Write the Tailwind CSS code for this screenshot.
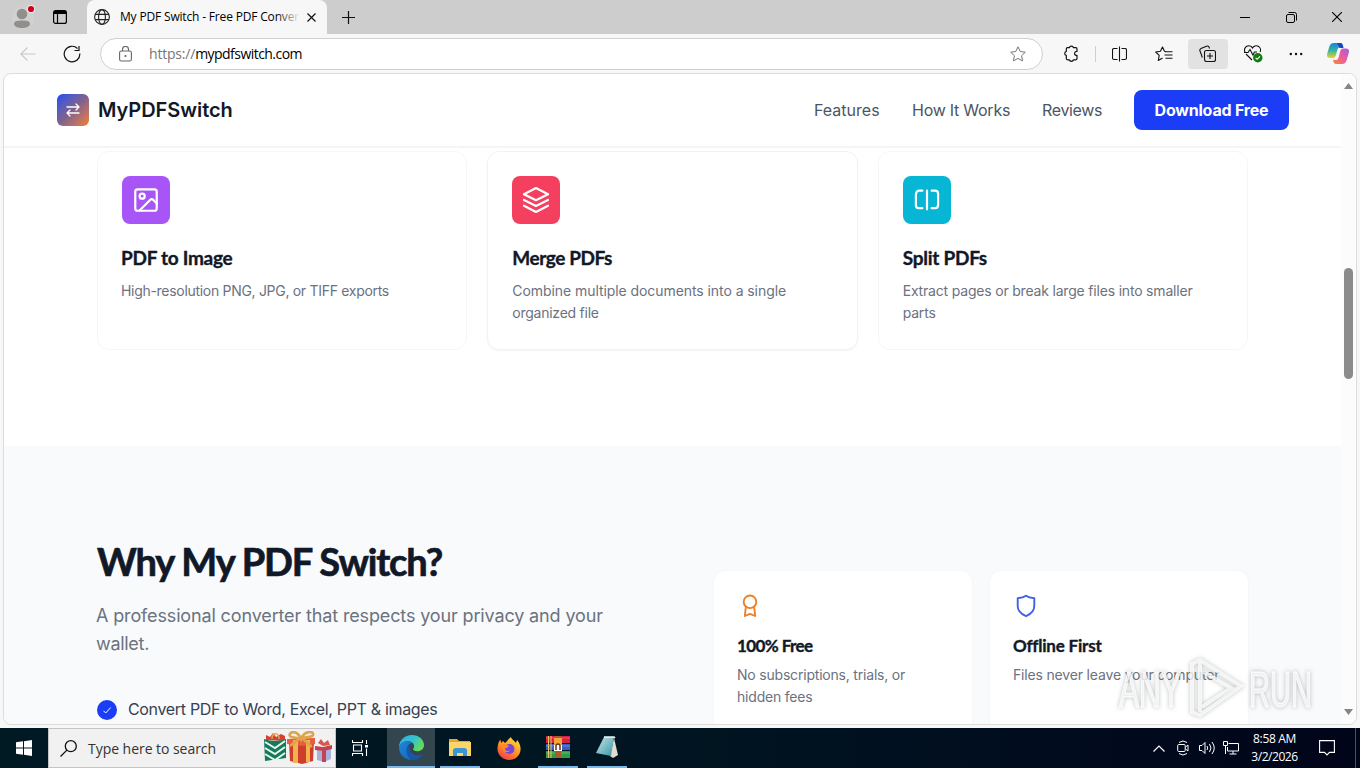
<!DOCTYPE html>
<html lang="en">
<head>
    <meta charset="UTF-8">
    <title>My PDF Switch - Free PDF Converter</title>
    <script src="https://cdn.jsdelivr.net/npm/@tailwindcss/browser@4"></script>
</head>
<body class="relative w-[1360px] h-[768px] overflow-hidden flex flex-col bg-[#f7f7f7] font-['Inter','Liberation_Sans',sans-serif] whitespace-nowrap">

    <!-- Tab strip -->
    <div class="h-[34px] shrink-0 bg-[#cdcdcd] flex items-center text-black font-['Open_Sans',sans-serif]">
        <div class="w-[87px] h-full flex items-center pl-3 rounded-br-lg">
            <svg class="w-6 h-7 shrink-0" viewBox="0 0 24 28">
                <circle cx="11" cy="15" r="11" fill="#d3d1cf"/>
                <circle cx="10" cy="11" r="5.3" fill="#918e8b"/>
                <path d="M2 21c0-3 3-3.500 8-3.500s8 .5 8 3.500c0 2.500-4 4-8 4s-8-1.500-8-4z" fill="#918e8b"/>
                <circle cx="19" cy="6" r="4" fill="#eee"/>
                <circle cx="19" cy="6" r="3.100" fill="#d0021b"/>
            </svg>
            <svg class="ml-[17px] w-[14px] h-[14px]" viewBox="0 0 14 14" fill="none" stroke="#000" stroke-width="1.200"><rect x=".6" y=".6" width="12.800" height="12.800" rx="2"/><path d="M4.500 3.500v9.500"/><path d="M1 2.500h12" stroke-width="3"/></svg>
        </div>
        <div class="w-[240px] h-full bg-[#f7f7f7] rounded-t-lg flex items-center">
            <svg class="ml-[7px] w-4 h-4 shrink-0" viewBox="0 0 16 16" fill="none" stroke="#222" stroke-width="1.100"><circle cx="8" cy="8" r="7.400"/><ellipse cx="8" cy="8" rx="3.400" ry="7.400"/><path d="M1.200 5.400h13.600M1.200 10.600h13.600"/></svg>
            <div class="relative ml-[10px] w-[180px] overflow-hidden text-xs tracking-[-0.17px]">My PDF Switch - Free PDF Converter
                <div class="absolute right-0 top-0 h-full w-6 bg-linear-to-r from-[#f7f7f7]/0 to-[#f7f7f7]"></div>
            </div>
            <svg class="ml-[7px] w-[9px] h-[9px] shrink-0" viewBox="0 0 9 9" stroke="#111" stroke-width="1.200"><path d="M.5.5l8 8M8.500.5l-8 8"/></svg>
        </div>
        <svg class="ml-[15px] w-[13px] h-[13px]" viewBox="0 0 13 13" stroke="#111" stroke-width="1.200"><path d="M6.500 0v13M0 6.500h13"/></svg>
        <svg class="ml-auto w-[10px] h-[10px]" viewBox="0 0 10 10" stroke="#000"><path d="M0 5.500h10"/></svg>
        <svg class="ml-9 w-[11px] h-[11px]" viewBox="0 0 11 11" fill="none" stroke="#000"><rect x=".5" y="2.500" width="8" height="8" rx="1.500"/><path d="M2.500.5h6a2 2 0 0 1 2 2v6"/></svg>
        <svg class="ml-[35px] mr-[18px] w-[10px] h-[10px]" viewBox="0 0 10 10" stroke="#000" stroke-width="1.100"><path d="M0 0l10 10M10 0L0 10"/></svg>
    </div>

    <!-- Address bar -->
    <div class="h-[39px] shrink-0 flex items-center font-['Open_Sans',sans-serif]">
        <svg class="ml-5 w-4 h-4" viewBox="0 0 16 16" fill="none" stroke="#c8c8c8" stroke-width="1.100"><path d="M15.500 8H.8M7.500 1.500L.8 8l6.700 6.500"/></svg>
        <svg class="ml-[27px] w-[18px] h-[18px]" viewBox="0 0 18 18" fill="none" stroke="#111" stroke-width="1.200"><path d="M16.800 8.500a7.800 7.800 0 1 1-2.300-5M16 1v4.500h-4.500"/></svg>
        <div class="ml-[19px] w-[943px] h-8 mt-px rounded-full border border-[#d0d0d0] bg-white flex items-center">
            <svg class="ml-[18px] w-[13px] h-4" viewBox="0 0 13 16" fill="none" stroke="#666" stroke-width="1.100"><rect x=".6" y="5" width="11.800" height="10" rx="1.800"/><path d="M3.500 5V3.500a3 3 0 0 1 6 0V5"/><circle cx="6.500" cy="10" r=".5" fill="#666"/></svg>
            <span class="ml-[17px] text-sm text-black"><span class="text-[#767676] tracking-[-0.2px]">https://</span><span class="tracking-[-0.54px]">mypdfswitch.com</span></span>
            <svg class="ml-auto mr-4 w-4 h-4" viewBox="0 0 16 16" fill="none" stroke="#777" stroke-linejoin="round"><path d="M8 .8l2.200 4.700 5.100.7-3.700 3.500.9 5.200L8 12.400l-4.500 2.500.9-5.200L.7 6.200l5.100-.7z"/></svg>
        </div>
        <svg class="ml-[20px] w-4 h-[17px]" viewBox="0 0 16 17" fill="none" stroke="#111" stroke-width="1.200" stroke-linejoin="round"><path d="M4.500 2.700h1.800a2.200 2.200 0 0 1 4.200 0h2.300a1.200 1.200 0 0 1 1.200 1.200v2.600a2 2 0 1 0 0 3.900v3.200a1.200 1.200 0 0 1-1.200 1.200h-2.300a2.200 2.200 0 0 1-4.200 0H4.500a1.200 1.200 0 0 1-1.200-1.200v-3.200a2 2 0 0 1 0-3.900V3.900a1.200 1.200 0 0 1 1.200-1.200z"/></svg>
        <div class="ml-4 w-px h-4 bg-[#d0d0d0]"></div>
        <svg class="ml-4 w-[15px] h-4" viewBox="0 0 15 16" fill="none" stroke="#111" stroke-width="1.100"><path d="M5.500 2.500H2A1.500 1.500 0 0 0 .5 4v8A1.500 1.500 0 0 0 2 13.500h3.500M7.500.5v15M9.500 2.500H13A1.500 1.500 0 0 1 14.500 4v8a1.500 1.500 0 0 1-1.500 1.500H9.500"/></svg>
        <svg class="ml-7 w-[18px] h-4" viewBox="0 0 18 16" fill="none" stroke="#111" stroke-width="1.100" stroke-linejoin="round"><path d="M11 5.500l-1.500-.2L7.500 1 5.400 5.300l-4.700.7 3.500 3.300-.9 5.200L7.500 12M10 5.700h7.500M9.500 9h8M10.500 12.300h7"/></svg>
        <div class="ml-[15px] w-10 h-[30px] mt-px rounded bg-[#e2e2e2] flex items-center justify-center">
            <svg class="w-[17px] h-[17px] -mt-px -ml-px" viewBox="0 0 17 17" fill="none" stroke="#111" stroke-width="1.100"><rect x="5.500" y="5.500" width="11" height="11" rx="2"/><path d="M11 8v6M8 11h6M3.300 12.500L2.300 9.500 1 6A2 2 0 0 1 2 3.500L7.500 1.200A2 2 0 0 1 10 2l.5 1.500"/></svg>
        </div>
        <svg class="ml-4 w-[19px] h-[18px]" viewBox="0 0 19 18" fill="none" stroke="#111" stroke-width="1.100"><path d="M1 7A4.200 4.200 0 0 1 8.500 3 4.200 4.200 0 0 1 16 7M2 9l6 6M0 7.500h4l2-3 3 5.500 1.500-3H13"/><circle cx="13.800" cy="12.700" r="4.700" fill="#107c10" stroke="none"/><path d="M11.600 12.800l1.500 1.500 2.900-3" stroke="#fff"/></svg>
        <svg class="ml-[26px] w-[14px] h-1" viewBox="0 0 14 4" fill="#111"><circle cx="1.800" cy="2" r="1.200"/><circle cx="7" cy="2" r="1.200"/><circle cx="12.200" cy="2" r="1.200"/></svg>
        <svg class="ml-6 w-[22px] h-[21px]" viewBox="0 0 22 21">
            <defs>
                <linearGradient id="copA" x1="0" y1="0" x2="0" y2="1"><stop stop-color="#1682e8"/><stop offset=".5" stop-color="#35b6a0"/><stop offset="1" stop-color="#f3cf28"/></linearGradient>
                <linearGradient id="copB" x1="1" y1="0" x2="0" y2="1"><stop stop-color="#a25be8"/><stop offset=".5" stop-color="#ec5c9b"/><stop offset="1" stop-color="#f78a34"/></linearGradient>
            </defs>
            <path d="M7 0h6c2 0 2.500 2 3 4h-3c-2 0-2.500 2-3.500 6s-1.500 5-4 5H3c-3 0-3.500-2-2.600-5l1.800-6C3 1.500 4.500 0 7 0z" fill="url(#copA)"/>
            <path d="M10 0h3.500c2 0 2.500 2 3 5h-4z" fill="#1749bc"/>
            <path d="M15 21H9c-2 0-2.500-2-3-4h3c2 0 2.500-2 3.500-6s1.500-5.500 4-5.500H19c3 0 3.500 2 2.600 5l-1.800 6C19 19.500 17.500 21 15 21z" fill="url(#copB)"/>
        </svg>
    </div>

    <!-- Browser viewport -->
    <div class="mx-[3px] h-[652px] shrink-0 rounded-lg border border-[#dcdcdc] bg-white overflow-hidden flex">
        <div class="w-[1337px] h-full shrink-0 overflow-hidden">
            <header class="h-[74px] flex items-center pl-[53px] pr-[52px] border-b-2 border-[#f5f5f6]">
                <div class="w-8 h-8 rounded-md bg-linear-to-br from-[#2043f5] via-[#80618b] to-[#f77a16] flex items-center justify-center">
                    <svg class="w-[14px] h-[14px]" viewBox="0 0 14 14" fill="none" stroke="#fff" stroke-width="1.300" stroke-linecap="round" stroke-linejoin="round"><path d="M1 4h12M10 1l3 3-3 3M13 10H1M4 7l-3 3 3 3"/></svg>
                </div>
                <span class="ml-[9px] text-xl font-semibold tracking-[-0.05px] text-[#111827]">MyPDFSwitch</span>
                <nav class="ml-auto -mt-px flex items-center text-base font-normal text-[#4b5563]">
                    <a class="w-[66px] mr-8 tracking-[0.02px]">Features</a>
                    <a class="w-[98px] mr-8 tracking-[-0.25px]">How It Works</a>
                    <a class="w-[60px] mr-8 tracking-[-0.35px]">Reviews</a>
                    <a class="mt-px w-[155px] h-10 rounded-lg bg-[#1a3df5] text-white font-bold flex items-center justify-center tracking-[-0.2px]">Download Free</a>
                </nav>
            </header>

            <!-- Tool cards -->
            <section class="h-[298px] pt-[3px] pl-[93px]">
                <div class="w-[1151px] h-[199px] grid grid-cols-3 gap-5">
                    <div class="rounded-xl border border-[#f6f6f7] p-6">
                        <div class="w-12 h-12 rounded-lg bg-[#a855f7] flex items-center justify-center">
                            <svg class="w-7 h-7" viewBox="0 0 24 24" fill="none" stroke="#fff" stroke-width="1.900" stroke-linecap="round" stroke-linejoin="round"><rect x="2.800" y="2.800" width="18.400" height="18.400" rx="2"/><circle cx="8.700" cy="8.700" r="2.200"/><path d="M21.300 15l-3-3a2 2 0 0 0-2.800 0L6.500 21"/></svg>
                        </div>
                        <h3 class="mt-5 -ml-px font-[Lato,sans-serif] text-[19px] leading-7 font-bold text-[#111827] tracking-[-0.28px] [-webkit-text-stroke:0.35px_#111827]">PDF to Image</h3>
                        <p class="mt-2 -ml-px text-sm leading-[22px] text-[#6b7280] tracking-[-0.3px]">High-resolution PNG, JPG, or TIFF exports</p>
                    </div>
                    <div class="rounded-xl border border-[#f1f2f3] shadow-xs p-6">
                        <div class="w-12 h-12 rounded-lg bg-[#f43f5e] flex items-center justify-center">
                            <svg class="w-7 h-7" viewBox="0 0 24 24" fill="none" stroke="#fff" stroke-width="1.900" stroke-linecap="round" stroke-linejoin="round"><path d="M12 1.800L22.300 7 12 12.200 1.700 7zM1.700 12L12 17.200 22.300 12M1.700 16.900L12 22.200l10.300-5.300"/></svg>
                        </div>
                        <h3 class="mt-5 font-[Lato,sans-serif] text-[19px] leading-7 font-bold text-[#111827] tracking-[-0.42px] [-webkit-text-stroke:0.35px_#111827]">Merge PDFs</h3>
                        <p class="mt-2 text-sm leading-[22px] text-[#6b7280] tracking-[-0.07px]">Combine multiple documents into a single<br><span class="tracking-[-0.25px]">organized file</span></p>
                    </div>
                    <div class="rounded-xl border border-[#f6f6f7] p-6">
                        <div class="w-12 h-12 rounded-lg bg-[#06b6d4] flex items-center justify-center">
                            <svg class="w-7 h-7" viewBox="0 0 24 24" fill="none" stroke="#fff" stroke-width="1.900" stroke-linecap="round" stroke-linejoin="round"><path d="M8 19H5c-1.500 0-2.500-.8-2.500-2.300V7.300C2.500 5.800 3.500 4 5 4h3M16 4h3c1.500 0 2.500 1.200 2.500 2.700v9.600c0 1.500-1 2.700-2.500 2.700h-3M12 4v16"/></svg>
                        </div>
                        <h3 class="mt-5 font-[Lato,sans-serif] text-[19px] leading-7 font-bold text-[#111827] tracking-[-0.25px] [-webkit-text-stroke:0.35px_#111827]">Split PDFs</h3>
                        <p class="mt-2 text-sm leading-[22px] text-[#6b7280] tracking-[-0.19px]">Extract pages or break large files into smaller<br>parts</p>
                    </div>
                </div>
            </section>

            <!-- Why section -->
            <section class="h-[300px] bg-[#f8fafc] pl-[93px] flex">
                <div class="w-[616px] pt-[91px]">
                    <h2 class="font-[Lato,sans-serif] text-[38px] leading-[48px] font-bold text-[#111827] tracking-[-1.15px] [-webkit-text-stroke:0.7px_#111827]">Why My PDF Switch?</h2>
                    <p class="mt-[17px] -ml-px text-lg leading-7 text-[#6b7280] tracking-[-0.14px]">A professional converter that respects your privacy and your<br><span class="tracking-[-0.3px]">wallet.</span></p>
                    <div class="mt-10 flex items-center gap-[11px] text-base text-[#374151]">
                        <svg class="w-5 h-5 shrink-0" viewBox="0 0 20 20"><circle cx="10" cy="10" r="10" fill="#1a3df5"/><path d="M6.500 10.800l2.200 2.200 5-5.500" fill="none" stroke="#fff"/></svg>
                        <span class="-mt-px tracking-[-0.33px]">Convert PDF to Word, Excel, PPT &amp; images</span>
                    </div>
                </div>
                <div class="pt-[124px] flex gap-4">
                    <div class="w-[260px] h-[200px] rounded-xl bg-white border border-[#f6f7f9] px-6 pt-[23px]">
                        <svg class="w-6 h-6" viewBox="0 0 24 24" fill="none" stroke="#ed8127" stroke-width="1.900" stroke-linecap="round" stroke-linejoin="round"><circle cx="12" cy="7.800" r="6.300"/><path d="M7.800 13.500L6.800 22l5.200-2.200 5.200 2.200-1-8.500"/></svg>
                        <h3 class="mt-4 -ml-px font-[Lato,sans-serif] text-[17px] leading-6 font-bold text-[#111827] tracking-[-0.6px] [-webkit-text-stroke:0.35px_#111827]">100% Free</h3>
                        <p class="mt-1.5 -ml-px text-sm leading-[22px] text-[#6b7280] tracking-[-0.2px]">No subscriptions, trials, or<br>hidden fees</p>
                    </div>
                    <div class="w-[260px] h-[200px] rounded-xl bg-white border border-[#f6f7f9] px-6 pt-[23px]">
                        <svg class="w-6 h-6" viewBox="0 0 24 24" fill="none" stroke="#4260e8" stroke-width="1.900" stroke-linecap="round" stroke-linejoin="round"><path d="M12 1.800c2.500 1.800 5 2.200 8.300 2.500V12c0 5-3.300 8-8.300 10.200C7 20 3.700 17 3.700 12V4.300C7 4 9.500 3.600 12 1.800z"/></svg>
                        <h3 class="mt-4 -ml-px font-[Lato,sans-serif] text-[17px] leading-6 font-bold text-[#111827] tracking-[-0.2px] [-webkit-text-stroke:0.35px_#111827]">Offline First</h3>
                        <p class="mt-1.5 -ml-px text-sm leading-[22px] text-[#6b7280] tracking-[-0.17px]">Files never leave your computer</p>
                    </div>
                </div>
            </section>
        </div>
        <!-- Scrollbar -->
        <div class="w-[14px] h-full bg-[#fcfcfc] flex flex-col items-center">
            <svg class="mt-[9px] w-[9px] h-[6px] shrink-0" viewBox="0 0 9 6" fill="#858585"><path d="M4.500 0L9 6H0z"/></svg>
            <div class="mt-[179px] w-[9px] h-[111px] rounded-full bg-[#8b8b8b]"></div>
            <svg class="mt-auto mb-[9px] w-[9px] h-[6px] shrink-0" viewBox="0 0 9 6" fill="#858585"><path d="M4.500 6L0 0h9z"/></svg>
        </div>
    </div>

    <!-- Taskbar -->
    <div class="mt-[3px] h-10 shrink-0 bg-linear-to-r from-[#001a24] via-[#001521] to-[#01051a] flex items-center font-['Open_Sans',sans-serif]">
        <div class="w-12 flex justify-center"><svg class="w-4 h-4" viewBox="0 0 16 16" fill="#fff"><path d="M0 2.300L7 1.300v6.200H0zM8 1.200L16 0v7.500H8zM0 8.500h7v6.200l-7-1zM8 8.500h8V16l-8-1.200z"/></svg></div>
        <div class="w-[288px] h-full bg-[#f1f1f1] border border-[#c5c5c5] flex items-center">
            <svg class="ml-[11px] w-[17px] h-[17px]" viewBox="0 0 17 17" fill="none" stroke="#111" stroke-width="1.300"><circle cx="10.800" cy="6.200" r="5.500"/><path d="M6.900 10.100L.5 16.500"/></svg>
            <span class="ml-[11px] mt-px text-sm text-[#333] tracking-[-0.04px]">Type here to search</span>
            <svg class="ml-auto mr-[3px] w-[68px] h-[34px]" viewBox="0 0 68 34">
                <path d="M2 9l0-5 4 2 3-4 3 4 5-3 4 2v5z" fill="#d8402e"/>
                <path d="M8 8c0-7 7-7 7 0" stroke="#dba65c" stroke-width="1.500" fill="none"/>
                <path d="M0 8q11 4 22 0v19L1 30z" fill="#137a5c"/>
                <path d="M1 11l10 6 10-7M1 17l10 6 10-7M1 23l10 6 10-7" stroke="#e7f4ec" stroke-width="2" fill="none"/>
                <path d="M25 10h25l-1 20-11 3-12-3z" fill="#cf3d2d"/>
                <path d="M23 8l28-1v6l-13 2-15-2z" fill="#e85c42"/>
                <path d="M29 9h5v23h-5zM42 9h4v22h-4z" fill="#f0b44d"/>
                <path d="M37 8C33-2 24 1 26 5c1 2 6 1 11 3 4-3 11-1 12-4 1-5-9-4-12 4zM35 8l-9 7M39 8l9 8" fill="none" stroke="#dfa44a" stroke-width="2.700"/>
                <path d="M53 17l7 1 7-2v12l-7 3-7-2z" fill="#a6b2dc"/>
                <path d="M51 15l8 1 9-2v4l-8 2-9-1zM58 17h4v14h-4z" fill="#c5414f"/>
                <path d="M59 15l-5-3 3-4 3 4 4-3 2 5z" fill="#d9574e"/>
            </svg>
        </div>
        <svg class="ml-4 w-4 h-4" viewBox="0 0 16 16" fill="none" stroke="#fff" stroke-width="1.100"><path d="M.5 0v2.500h10V0M.5 16v-2.500h10V16M1.500 5h8v6h-8zM14.500 0v4M14.500 8.500V16"/><path d="M13 5h3v2.500h-3z" fill="#fff" stroke="none"/></svg>
        <div class="ml-[19px] w-12 h-full bg-[#33454e] border-b-2 border-[#76b9ed] flex items-center justify-center">
            <svg class="w-[25px] h-[25px]" viewBox="0 0 24 24">
                <defs>
                    <linearGradient id="edgeA" x1="0" y1="0" x2="1" y2=".5"><stop stop-color="#2fa9e8"/><stop offset=".6" stop-color="#35c4cc"/><stop offset="1" stop-color="#65db55"/></linearGradient>
                    <linearGradient id="edgeB" x1="0" y1="0" x2="1" y2="1"><stop stop-color="#2086dc"/><stop offset="1" stop-color="#1464b8"/></linearGradient>
                </defs>
                <path d="M0 12C0 5 5.500 0 12.500 0 19 0 24 4.500 24 9.500c0 4-3 6-6.500 6-2.500 0-4-.8-4-1.800 0-.7 1-1 1-3C14.500 8 12 6 8.500 6 4 6 1 8.500 0 12z" fill="url(#edgeA)"/>
                <path d="M0 12c1-4 4-6 8.500-6 2 0 3.500.7 4.500 1.600-3 0-5.500 3-5.500 6.900C7.500 20 12 24 12 24 5.500 24 0 18.500 0 12z" fill="url(#edgeB)"/>
                <path d="M10 9c-2 2-2.500 3.500-2.500 5.500C7.500 20 11 24 14 24c4 0 7.500-3 9-5.600-6 3-14-.4-13-9.400z" fill="#1857a8"/>
            </svg>
        </div>
        <div class="ml-[5px] w-10 h-full border-b-2 border-[#76b9ed] flex items-center justify-center">
            <svg class="w-[22px] h-[19px]" viewBox="0 0 22 19"><path d="M0 1h8l2 2h11v4H0z" fill="#e8a526"/><path d="M0 4h22v14H0z" fill="#fbd568"/><path d="M4 18v-6.500l2-1.500h10l2 1.500V18h-4v-3H8v3z" fill="#3b97d3"/></svg>
        </div>
        <div class="ml-[5px] w-12 h-full flex items-center justify-center">
            <svg class="w-6 h-6" viewBox="0 0 24 24">
                <defs><linearGradient id="fox" x1=".8" y1="0" x2=".2" y2="1"><stop stop-color="#ffe23e"/><stop offset=".5" stop-color="#ff9422"/><stop offset="1" stop-color="#f33550"/></linearGradient></defs>
                <path d="M14 1c0 2 4 4 5 6l1-3c2 2 4 6 3.500 10C23 20 18 24 12 24S0 19 .5 12C.7 8 2 5 3.500 3.500L4 7l2-2 2 2c2-1 3-4 6-6z" fill="url(#fox)"/>
                <circle cx="12.500" cy="13" r="5" fill="#7545dc"/>
                <path d="M5 9c3-2 5 0 7 1-1 2-3 1.500-4 2.500 0 2 2 3 5 2-2 3-8 2-8-5.500z" fill="#ff8a2b"/>
            </svg>
        </div>
        <div class="ml-[5px] w-10 h-full border-b-2 border-[#76b9ed] flex items-center justify-center">
            <svg class="w-6 h-[22px]" viewBox="0 0 24 22"><path d="M0 0h24v7H0z" fill="#d8213f"/><path d="M0 8h24v6H0z" fill="#345fc5"/><path d="M0 15h24v7H0z" fill="#2ea043"/><path d="M0 2h24M0 10h24M0 17h24" stroke="#fff" stroke-opacity=".25"/><path d="M2.500 0v22M5 0v22" stroke="#e9c868"/><path d="M9 0h6v22H9z" fill="#a95c2a"/><path d="M8 2h8v8H8z" fill="#f0a63b"/><path d="M8 9h8v6H8z" fill="#fff"/><path d="M10 14v-4a2 2 0 0 1 4 0v4" fill="none" stroke="#6a3515" stroke-width="1.500"/></svg>
        </div>
        <div class="ml-[9px] w-10 h-full border-b-2 border-[#76b9ed] flex items-center justify-center">
            <svg class="w-6 h-[22px]" viewBox="0 0 24 22"><defs><linearGradient id="note" x1="0" y1="0" x2="1" y2="1"><stop stop-color="#c5e8ec"/><stop offset="1" stop-color="#3993a2"/></linearGradient></defs><path d="M19 2l4 17-5 3-3-2z" fill="#e1ddd0"/><path d="M9 1h10l-3 19L1 17z" fill="url(#note)"/><path d="M9 1h10l1 1" stroke="#f3f7f7" stroke-width="1.500" fill="none"/></svg>
        </div>
        <svg class="ml-auto w-3 h-[7px]" viewBox="0 0 12 7" fill="none" stroke="#fff" stroke-width="1.200"><path d="M.5 6.500L6 1l5.500 5.500"/></svg>
        <svg class="ml-3 w-3 h-4" viewBox="0 0 12 16" fill="none" stroke="#fff"><rect x=".7" y="4.500" width="7.500" height="7" rx="1"/><path d="M8.500 7l2.500-2v6L8.500 9M2 2.500q4-3 8 0M2 13.500q4 3 8 0"/></svg>
        <svg class="ml-[10px] w-4 h-[14px]" viewBox="0 0 16 14" fill="none" stroke="#fff"><path d="M.5 4.500H3l3-3v11l-3-3H.5zM8 5q1.500 2 0 4M10.500 3q3 4 0 8M13 1q4.500 6 0 12"/></svg>
        <svg class="ml-2 w-4 h-[14px]" viewBox="0 0 16 14" fill="none" stroke="#fff"><path d="M5.500 2.500h10v7.500H4.500V6M10 10v3M6.500 13h7M.5.500h4v4h-4zM2.500 4.500V13"/></svg>
        <div class="ml-[10px] w-[51px] text-center text-xs leading-[18px] text-white"><span class="tracking-[-0.35px]">8:58 AM</span><br><span class="tracking-[-0.45px]">3/2/2026</span></div>
        <svg class="ml-[19px] mr-5 w-4 h-4" viewBox="0 0 16 16" fill="none" stroke="#fff" stroke-width="1.100"><path d="M.6.6h14.800v11.800H10.500L8 15l-2.500-2.600H.6z"/></svg>
        <div class="w-px h-full bg-[#4c515b] mr-[4px]"></div>
    </div>

    <!-- Watermark -->
    <svg class="absolute left-[1110px] top-[650px] w-[210px] h-[74px] drop-shadow-[0_0_2px_rgba(90,95,100,0.5)]" viewBox="0 0 210 74">
        <g fill="#fff" fill-opacity=".72" stroke="#fff" stroke-opacity=".72" stroke-width="1.500">
            <text x="9" y="57" textLength="62" lengthAdjust="spacingAndGlyphs" font-family="Liberation Sans" font-size="50">ANY</text>
            <text x="139" y="57" textLength="63" lengthAdjust="spacingAndGlyphs" font-family="Liberation Sans" font-size="50">RUN</text>
        </g>
        <g fill="none" stroke="#fff" stroke-opacity=".75" stroke-width="4">
            <path d="M82 62V14l8-4 41 26-41 29z"/>
            <path d="M90 12v50M92 21l29 17-29 19"/>
        </g>
    </svg>
</body>
</html>
